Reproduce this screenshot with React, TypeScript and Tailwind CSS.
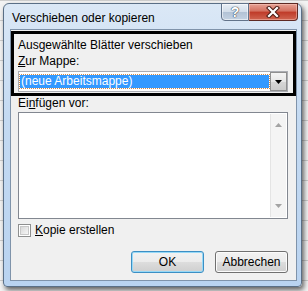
import React from 'react'

const font = "font-['Liberation_Sans',Arial,sans-serif]"

const Btn = ({ label, primary }: { label: string; primary?: boolean }) => (
  <button
    className={
      'w-[73px] h-[22px] rounded-[3px] border text-[12px] leading-[15px] text-black bg-[linear-gradient(#f2f2f2_0%,#ebebeb_50%,#dddddd_50%,#cfcfcf_100%)] ' +
      (primary
        ? 'border-[#3c8fc4] shadow-[inset_0_0_0_1px_#97d9f7]'
        : 'border-[#707070] shadow-[inset_0_0_0_1px_#fbfbfb]')
    }
  >
    {label}
  </button>
)

export default function App() {
  return (
    <div
      className={
        'w-[308px] h-[291px] overflow-hidden pl-[3px] pt-[3px] bg-[#f3f3f3] bg-[linear-gradient(to_bottom,#cdcdcd_1px,transparent_1px)] bg-size-[100%_20px] ' +
        font
      }
    >
      <div className="w-[299px] h-[284px] flex flex-col rounded-t-[6px] rounded-b-[4px] border border-[#5a6f86] bg-[linear-gradient(to_bottom,#dbe8f6,#c4daf2_40%,#b9d3f0)] shadow-[2px_3px_5px_rgba(0,0,0,0.6)]">
        {/* title bar */}
        <div className="h-[25px] flex items-start">
          <span className="mt-[7px] ml-[8px] text-[12px] leading-[15px] text-black">Verschieben oder kopieren</span>
          <div className="ml-auto mr-[3px] -mt-[1px] flex">
            <div className="w-[28px] h-[18px] rounded-bl-[4px] border border-[#62738a] bg-[linear-gradient(to_bottom,#e9eff6,#d2dde9_50%,#b2c2d5_51%,#c4d2e2)] shadow-[inset_0_0_0_1px_rgba(255,255,255,0.55)] flex items-center justify-center">
              <span className="text-[14px] font-bold leading-none text-white [text-shadow:0_0_1px_#3d4a5a,0_0_1px_#3d4a5a,0_0_1px_#3d4a5a]">?</span>
            </div>
            <div className="w-[49px] h-[18px] rounded-br-[4px] border border-l-0 border-[#5e2a24] bg-[linear-gradient(to_bottom,#e6a194,#d3705f_45%,#bf3a28_50%,#cf6551)] shadow-[inset_0_0_0_1px_rgba(255,210,200,0.45)] flex items-center justify-center">
              <svg width="14" height="12" viewBox="0 0 14 12">
                <path d="M3 2 L11 10 M11 2 L3 10" stroke="#4a1b14" strokeWidth="4.2" strokeLinecap="square" />
                <path d="M3 2 L11 10 M11 2 L3 10" stroke="#ffffff" strokeWidth="2.2" strokeLinecap="square" />
              </svg>
            </div>
          </div>
        </div>

        {/* client area */}
        <div className="ml-[6px] w-[287px] h-[252px] border border-[#7f93aa] bg-[#f0f0f0] flex flex-col text-[12px] leading-[15px] text-black">
          <div className="mt-[1px] w-[285px] h-[65px] border-[3px] border-black pt-[4px] pl-[4px] flex flex-col">
            <div className="h-[15px]">Ausgewählte Blätter verschieben</div>
            <div className="h-[15px] mt-[1px]">
              <span className="underline">Z</span>ur Mappe:
            </div>
            <div className="mt-[2px] w-[270px] h-[21px] border border-[#abadb3] bg-white flex items-center pl-[1px]">
              <div className="h-[13px] flex-1 bg-[#3399ff] outline-1 outline-dotted outline-[#d08a4c] text-white leading-[13px] pl-[1px]">
                (neue Arbeitsmappe)
              </div>
              <div className="ml-[1px] w-[17px] h-[19px] border border-[#8f8f8f] bg-[linear-gradient(to_bottom,#f4f4f4,#e6e6e6_50%,#d6d6d6_51%,#cbcbcb)] flex items-center justify-center">
                <svg width="7" height="4" viewBox="0 0 7 4">
                  <path d="M0 0 H7 L3.5 4 Z" fill="#000" />
                </svg>
              </div>
            </div>
          </div>

          <div className="h-[15px] pl-[7px]">
            Ei<span className="underline">n</span>fügen vor:
          </div>
          <div className="ml-[7px] mt-[1px] w-[270px] h-[107px] border border-[#828790] bg-white flex justify-end p-[1px]">
            <div className="w-[16px] h-full bg-[#f4f4f4] border-l border-[#e4e4e4] flex flex-col items-center justify-between py-[9px]">
              <svg width="7" height="4" viewBox="0 0 7 4">
                <path d="M0 4 H7 L3.5 0 Z" fill="#a3a3a3" />
              </svg>
              <svg width="7" height="4" viewBox="0 0 7 4">
                <path d="M0 0 H7 L3.5 4 Z" fill="#a3a3a3" />
              </svg>
            </div>
          </div>

          <div className="ml-[7px] mt-[5px] h-[13px] flex items-center">
            <div className="w-[13px] h-[13px] border border-[#8e8f8f] bg-white p-[1px]">
              <div className="w-full h-full bg-[linear-gradient(135deg,#d8d8d8,#f6f6f6)] border border-[#c8c8c8]" />
            </div>
            <span className="ml-[4px]">
              <span className="underline">K</span>opie erstellen
            </span>
          </div>

          <div className="mt-[14px] pr-[8px] flex justify-end gap-[11px]">
            <Btn label="OK" primary />
            <Btn label="Abbrechen" />
          </div>
        </div>
      </div>
    </div>
  )
}
